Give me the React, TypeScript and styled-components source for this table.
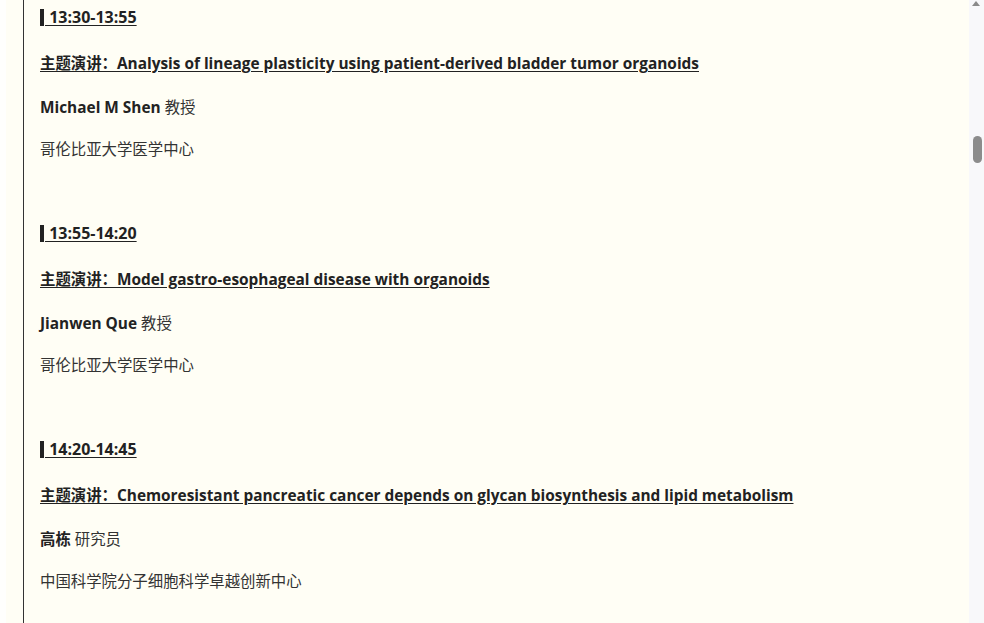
import React from "react";
import styled, { createGlobalStyle } from "styled-components";

const Global = createGlobalStyle`
  html, body { margin: 0; padding: 0; background: #fffefa; overflow: hidden; }
  body { font-family: "Open Sans", "Noto Sans CJK SC", sans-serif; color: #333; }
`;

const Page = styled.div`
  position: relative;
  width: 984px;
  height: 623px;
  overflow: hidden;
  background: #fffffb;
  display: flex;
`;

const Gutter = styled.div`
  width: 6px;
  flex: none;
  background: #fffffd;
`;

const Main = styled.div`
  flex: 1;
  background: #fffef5;
  padding-left: 17px;
  display: flex;
`;

const Column = styled.div`
  flex: 1;
  border-left: 1px solid #333;
  padding: 6px 0 0 16px;
`;

const Para = styled.p<{ $gap: number }>`
  margin: 0 0 ${(p) => p.$gap}px;
  font-size: 15.4px;
  line-height: 24px;
  color: #333;
`;

const Time = styled.span`
  display: inline-block;
  border-left: 4px solid #222;
  padding-left: 1px;
  font-size: 16px;
  line-height: 17px;
  font-weight: 700;
  text-decoration: underline;
  text-underline-offset: 2px;
  color: #222;
`;

const Title = styled.span`
  font-weight: 700;
  text-decoration: underline;
  text-underline-offset: 2px;
  color: #222;
`;

const Name = styled.strong`
  font-weight: 700;
  color: #222;
`;

const Scrollbar = styled.div`
  position: absolute;
  top: 0;
  right: 0;
  width: 15px;
  height: 623px;
  background: #f8f8fa;
`;

const Arrow = styled.div`
  position: absolute;
  top: 1px;
  left: 3px;
  width: 0;
  height: 0;
  border-left: 4px solid transparent;
  border-right: 4px solid transparent;
  border-bottom: 5px solid #8a8a8a;
`;

const Thumb = styled.div`
  position: absolute;
  top: 136px;
  left: 4px;
  width: 9px;
  height: 27px;
  border-radius: 5px;
  background: #8c8c8c;
`;

type Talk = { time: string; title: string; name: string; role: string; org: string };

const talks: Talk[] = [
  {
    time: "13:30-13:55",
    title: "主题演讲：Analysis of lineage plasticity using patient-derived bladder tumor organoids",
    name: "Michael M Shen",
    role: "教授",
    org: "哥伦比亚大学医学中心",
  },
  {
    time: "13:55-14:20",
    title: "主题演讲：Model gastro-esophageal disease with organoids",
    name: "Jianwen Que",
    role: "教授",
    org: "哥伦比亚大学医学中心",
  },
  {
    time: "14:20-14:45",
    title: "主题演讲：Chemoresistant pancreatic cancer depends on glycan biosynthesis and lipid metabolism",
    name: "高栋",
    role: "研究员",
    org: "中国科学院分子细胞科学卓越创新中心",
  },
];

export default function App() {
  return (
    <>
      <Global />
      <Page>
        <Gutter />
        <Main>
          <Column>
            {talks.map((t) => (
              <React.Fragment key={t.time}>
                <Para $gap={22}>
                  <Time>{"\u00a0" + t.time}</Time>
                </Para>
                <Para $gap={20}>
                  <Title>{t.title}</Title>
                </Para>
                <Para $gap={18}>
                  <Name>{t.name}</Name> {t.role}
                </Para>
                <Para $gap={60}>{t.org}</Para>
              </React.Fragment>
            ))}
          </Column>
        </Main>
        <Scrollbar>
          <Arrow />
          <Thumb />
        </Scrollbar>
      </Page>
    </>
  );
}
